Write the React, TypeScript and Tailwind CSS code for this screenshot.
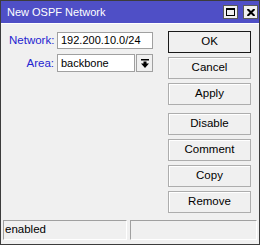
const buttons = ["OK", "Cancel", "Apply", "Disable", "Comment", "Copy", "Remove"]

const WinButton = ({ label, primary }: { label: string; primary?: boolean }) => (
    <button
        className={`h-[22px] w-[83px] text-[11.5px] text-black bg-[#f0f0f0] border ${
            primary ? "border-[#1a1a1a]" : "border-[#adadad] shadow-[inset_1px_1px_0_#ffffff]"
        }`}
    >
        {label}
    </button>
)

const App = () => {
    return (
        <div className="w-[262px] h-[247px] bg-white font-['Liberation_Sans',Arial,sans-serif]">
            <div className="w-[260px] h-[245px] border border-[#3c3c3c] flex flex-col bg-[#f0f0f0]">
                <div className="h-[22px] bg-[#4f4fc6] flex items-center justify-between pl-[6px] pr-[1px]">
                    <span className="text-white text-[11px]">New OSPF Network</span>
                    <div className="flex gap-[5px]">
                        <div className="w-[15px] h-[14px] bg-[#f0f0f0] border border-[#5a5a5a] flex items-center justify-center">
                            <div className="w-[9px] h-[8px] border border-black border-t-2" />
                        </div>
                        <div className="w-[15px] h-[14px] bg-[#f0f0f0] border border-[#5a5a5a] flex items-center justify-center">
                            <svg width="8" height="7" viewBox="0 0 8 7">
                                <path d="M0.5 0 L7.5 7 M7.5 0 L0.5 7" stroke="#000" strokeWidth="2" />
                            </svg>
                        </div>
                    </div>
                </div>
                <div className="h-[1px] bg-white" />
                <div className="flex-1 flex">
                    <div className="w-[166px] pt-[8px] pl-[8px] flex flex-col gap-[5px]">
                        <div className="flex items-center">
                            <span className="w-[48px] text-right pr-[3px] text-[11.5px] text-[#2424d0]">Network:</span>
                            <div className="w-[96px] h-[17px] bg-white border border-[#a0a0a0] text-[11px] text-black pl-[3px] leading-[15px]">
                                192.200.10.0/24
                            </div>
                        </div>
                        <div className="flex items-center">
                            <span className="w-[48px] text-right pr-[3px] text-[11.5px] text-[#2424d0]">Area:</span>
                            <div className="w-[78px] h-[18px] bg-white border border-[#a0a0a0] text-[11px] text-black pl-[3px] leading-[16px]">
                                backbone
                            </div>
                            <div className="ml-[1px] w-[17px] h-[18px] bg-[#f0f0f0] border border-[#a0a0a0] flex items-center justify-center">
                                <svg width="8" height="9" viewBox="0 0 8 9">
                                    <path d="M0 0.75 H8" stroke="#000" strokeWidth="1.5" />
                                    <path d="M2.5 2.5 H5.5 V4.5 H8 L4 9 L0 4.5 H2.5 Z" fill="#000" />
                                </svg>
                            </div>
                        </div>
                    </div>
                    <div className="pt-[7px] pl-[1px] flex flex-col">
                        <div className="flex flex-col gap-[4px]">
                            {buttons.slice(0, 3).map((b, i) => (
                                <WinButton key={b} label={b} primary={i === 0} />
                            ))}
                        </div>
                        <div className="flex flex-col gap-[4px] mt-[8px]">
                            {buttons.slice(3).map((b) => (
                                <WinButton key={b} label={b} />
                            ))}
                        </div>
                    </div>
                </div>
                <div className="h-[24px] flex gap-[3px] pl-[2px] pr-[2px] pb-[4px]">
                    <div className="w-[124px] border border-[#a0a0a0] border-r-white border-b-white text-[11.5px] text-black pl-[1px] leading-[17px]">
                        enabled
                    </div>
                    <div className="flex-1 border border-[#a0a0a0] border-r-white border-b-white" />
                </div>
            </div>
        </div>
    )
}

export default App
